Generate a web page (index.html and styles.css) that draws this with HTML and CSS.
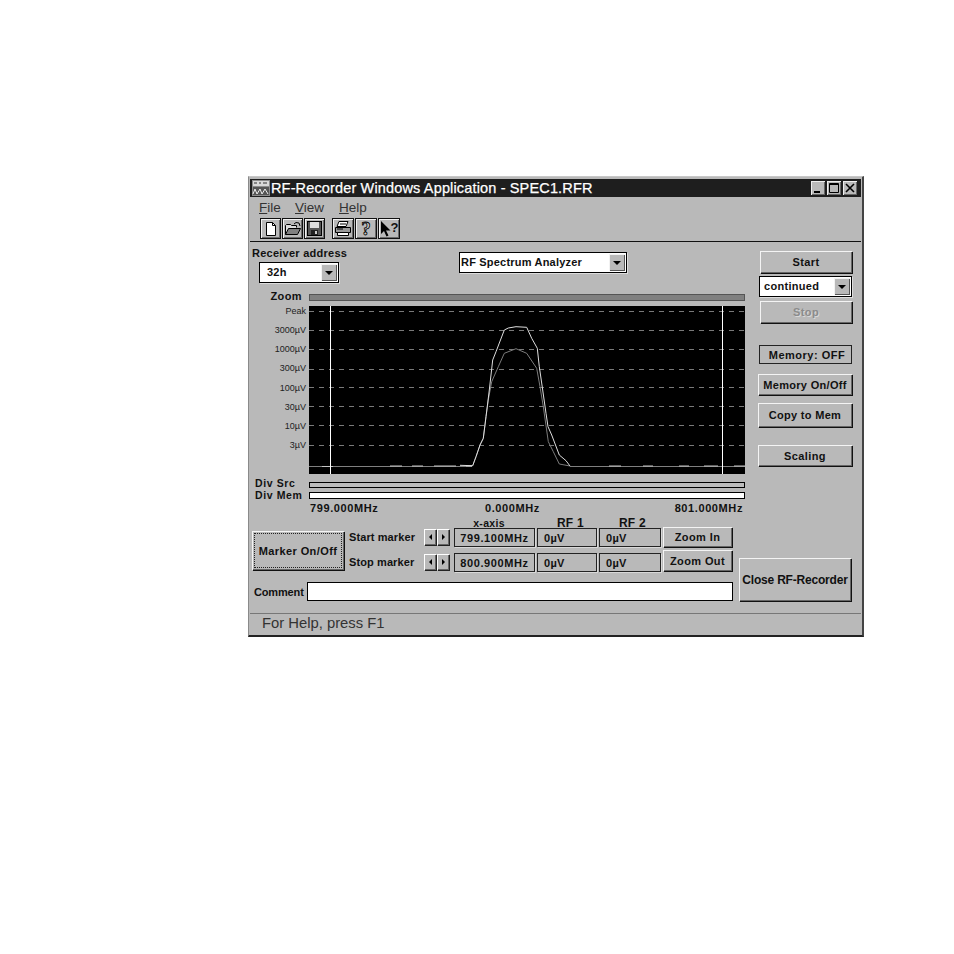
FILE: index.html
```html
<!DOCTYPE html>
<html lang="en">
<head>
<meta charset="utf-8">
<title>RF-Recorder Windows Application</title>
<link rel="stylesheet" href="styles.css">
</head>
<body>
<div class="window">
  <div class="titlebar">
    <svg class="app-icon" width="18" height="16" viewBox="0 0 18 16"><rect width="18" height="16" fill="#8c8c8c"/><rect x="1" y="1" width="16" height="5" fill="#d8d8d8"/><path d="M2 3h3M7 3h2M11 3h4" stroke="#333"/><rect x="1" y="7" width="16" height="8" fill="#555"/><path d="M1 14l2-5 2 5 3-5 2 5 3-5 3 5" fill="none" stroke="#eee"/></svg>
    <span class="title-text">RF-Recorder Windows Application - SPEC1.RFR</span>
    <div class="caption-buttons">
      <span class="caption-btn"><svg width="14" height="14" viewBox="0 0 14 14"><rect x="3" y="10" width="6" height="2" fill="#000"/></svg></span>
      <span class="caption-btn"><svg width="14" height="14" viewBox="0 0 14 14"><path d="M2.500 2.500h9v9h-9zM2.500 3.500h9" fill="none" stroke="#000"/></svg></span>
      <span class="caption-btn"><svg width="14" height="14" viewBox="0 0 14 14"><path d="M3 3l8 8M11 3l-8 8" stroke="#000" stroke-width="1.6"/></svg></span>
    </div>
  </div>
  <div class="menubar"><span class="menu-item"><u>F</u>ile</span><span class="menu-item"><u>V</u>iew</span><span class="menu-item"><u>H</u>elp</span></div>
  <div class="toolbar">
    <div class="tool-group">
      <span class="tool"><svg width="14" height="16" viewBox="0 0 14 16"><path d="M2.500 1.500h6l3 3v10h-9z" fill="#fff" stroke="#000"/><path d="M8.500 1.500v3h3" fill="none" stroke="#000"/></svg></span>
      <span class="tool"><svg width="18" height="14" viewBox="0 0 18 14"><path d="M1.500 12.500v-9l1-1h4l1 1h5v2" fill="#ddd" stroke="#000"/><path d="M1.500 12.500l3-6h12l-3 6z" fill="#808080" stroke="#000"/><path d="M10 2l2-1.500 3 .5 1 3" fill="none" stroke="#000"/></svg></span>
      <span class="tool"><svg width="15" height="15" viewBox="0 0 15 15"><rect x=".5" y=".5" width="14" height="14" fill="#555" stroke="#000"/><rect x="3" y="1" width="9" height="6" fill="#ddd"/><rect x="4" y="9" width="7" height="5" fill="#222"/><rect x="8" y="10" width="2" height="3" fill="#ccc"/></svg></span>
    </div>
    <div class="tool-group tool-group-wide">
      <span class="tool"><svg width="18" height="15" viewBox="0 0 18 15"><path d="M5 .5h9l-2 5H3z" fill="#fff" stroke="#000"/><path d="M1.500 6.500h15v5h-15z" fill="#999" stroke="#000"/><path d="M3.500 11.500h11v3h-11z" fill="#fff" stroke="#000"/><path d="M3 8h6M6 3h6" stroke="#000"/></svg></span>
      <span class="tool"><span class="tool-question">?</span></span>
      <span class="tool"><svg class="tool-cursor" width="11" height="16" viewBox="0 0 11 16"><path d="M1 0v13l3-3 2.500 5.500 2-1L6 9.500h4.500z" fill="#000"/></svg><span class="tool-helpmark">?</span></span>
    </div>
  </div>

  <div class="upper">
    <div class="upper-left">
      <div class="selectors">
        <div class="receiver">
          <div class="field-title">Receiver address</div>
          <div class="combo combo-receiver"><span class="combo-value">32h</span><span class="combo-arrow"><i></i></span></div>
        </div>
        <div class="combo combo-mode"><span class="combo-value">RF Spectrum Analyzer</span><span class="combo-arrow"><i></i></span></div>
      </div>
      <div class="plot-grid">
        <div class="row-label zoom-label">Zoom</div>
        <div class="zoom-bar"></div>
        <div class="axis-labels">
          <span>Peak</span><span>3000µV</span><span>1000µV</span><span>300µV</span><span>100µV</span><span>30µV</span><span>10µV</span><span>3µV</span>
        </div>
        <svg class="chart" width="436" height="168" viewBox="0 0 436 168">
          <rect width="436" height="168" fill="#000"/>
          <g stroke="#7a7a7a" stroke-dasharray="5 5">
            <path d="M0 5.500h436M0 24.500h436M0 43.500h436M0 63.500h436M0 81.500h436M0 100.500h436M0 119.500h436M0 139.500h436"/>
          </g>
          <path d="M0 160.500h163M261 160.500h175" stroke="#7f7f7f"/>
          <path d="M13 160.500h11M81 160h12M103 160h11M125 160h22M157 160h6M300 160h12M334 160h10M370 160h10M395 160h14M425 160h11" stroke="#c4c4c4" stroke-width="1"/>
          <path d="M21.500 0v168M413.500 0v168" stroke="#fff"/>
          <polyline fill="none" stroke="#7c7c7c" points="163.700,159.700 167,150.700 171,139 174.300,132.300 177,110.700 179.300,94 182.700,75.700 189.300,60.700 195.300,47.300 207,42.700 217.700,47.300 227.700,62.300 231,80.700 234.300,100.700 239.300,135.700 244.300,145.700 250.300,158 261,160"/>
          <polyline fill="none" stroke="#dedede" points="151,159.300 163.700,159.700 167,150.700 171,139 174.300,132.300 177,110.700 180.300,84 183.700,54 187,45.700 195.300,24 199.300,22 207,20.700 217.700,21.300 222.700,32.300 228.300,42.300 230.300,60.700 233.700,84 237,107.300 239,120.700 242.700,129 250.300,149 257,154.700 261,160"/>
        </svg>
        <div class="row-label div-src-label">Div Src</div>
        <div class="div-bar div-src"></div>
        <div class="row-label div-mem-label">Div Mem</div>
        <div class="div-bar div-mem"></div>
        <div class="freq-row"><span>799.000MHz</span><span>0.000MHz</span><span>801.000MHz</span></div>
      </div>
    </div>
    <div class="side">
      <button class="btn side-start">Start</button>
      <div class="combo combo-run"><span class="combo-value">continued</span><span class="combo-arrow"><i></i></span></div>
      <button class="btn side-stop">Stop</button>
      <div class="memory-state">Memory: OFF</div>
      <button class="btn side-mem">Memory On/Off</button>
      <button class="btn side-copy">Copy to Mem</button>
      <button class="btn side-scale">Scaling</button>
    </div>
  </div>

  <div class="lower">
    <div class="lower-left">
      <div class="marker-area">
        <button class="btn marker-btn"><span class="focus-box">Marker On/Off</span></button>
        <div class="marker-rows">
          <div class="marker-row marker-head">
            <span class="col-head head-x">x-axis</span><span class="col-head head-rf1">RF 1</span><span class="col-head head-rf2">RF 2</span>
          </div>
          <div class="marker-row marker-row-start">
            <span class="marker-label">Start marker</span>
            <span class="spin"><b class="spin-btn"><i class="tri-left"></i></b><b class="spin-btn"><i class="tri-right"></i></b></span>
            <span class="readout readout-x">799.100MHz</span><span class="readout">0µV</span><span class="readout">0µV</span>
            <button class="btn zoom-btn">Zoom In</button>
          </div>
          <div class="marker-row marker-row-stop">
            <span class="marker-label">Stop marker</span>
            <span class="spin"><b class="spin-btn"><i class="tri-left"></i></b><b class="spin-btn"><i class="tri-right"></i></b></span>
            <span class="readout readout-x">800.900MHz</span><span class="readout">0µV</span><span class="readout">0µV</span>
            <button class="btn zoom-btn zoom-out">Zoom Out</button>
          </div>
        </div>
      </div>
      <div class="comment-row"><span class="comment-label">Comment</span><div class="comment-input"></div></div>
    </div>
    <button class="btn close-btn">Close RF-Recorder</button>
  </div>
  <div class="statusbar">For Help, press F1</div>
</div>
</body>
</html>
```

FILE: styles.css
```css
* { box-sizing: border-box; }
html, body { margin: 0; padding: 0; background: #fff; }
body { width: 954px; height: 954px; padding: 176px 0 0 248px; font-family: "Liberation Sans", Arial, sans-serif; color: #111; }

.window { width: 616px; height: 461px; background: #b9b9b9; padding: 2px 1px 0; border: 1px solid #8a8a8a; border-right: 2px solid #444; border-bottom: 2px solid #222; border-top-color: #c8c8c8; display: flex; flex-direction: column; }

.titlebar { height: 18px; background: #1e1e1e; display: flex; align-items: center; color: #fff; padding-left: 2px; flex: none; }
.app-icon { flex: none; }
.title-text { font-size: 14.5px; margin-left: 1px; letter-spacing: .15px; white-space: nowrap; -webkit-text-stroke: .25px #fff; }
.caption-buttons { margin-left: auto; display: flex; padding-right: 4px; gap: 2px; }
.caption-btn { width: 14px; height: 14px; background: #b9b9b9; display: flex; align-items: center; justify-content: center; box-shadow: inset 1px 1px 0 #eee, inset -1px -1px 0 #666; }

.menubar { height: 18px; display: flex; padding-left: 9px; font-size: 13.5px; color: #333; align-items: center; flex: none; margin-top: 1px; }
.menu-item { width: 44px; }
.menu-item:first-child { width: 36px; }

.toolbar { height: 26px; padding: 2px 0 0 10px; border-bottom: 1px solid #111; flex: none; display: flex; gap: 7px; }
.tool-group { display: flex; gap: 1px; height: 21px; }
.tool { width: 21px; height: 21px; background: #b9b9b9; display: flex; align-items: center; justify-content: center; border: 1px solid #111; box-shadow: inset 1px 1px 0 #f2f2f2, inset -1px -1px 0 #6a6a6a; }
.tool-group-wide .tool { width: 22px; }
.tool-question { font-family: "Liberation Serif", serif; font-weight: bold; font-size: 19px; line-height: 17px; color: #c8c8c8; -webkit-text-stroke: .8px #000; }
.tool-cursor { flex: none; }
.tool-helpmark { font-weight: bold; font-size: 13px; line-height: 13px; margin-top: -3px; }

.upper { display: flex; height: 275px; flex: none; }
.upper-left { width: 495px; display: flex; flex-direction: column; }
.selectors { display: flex; height: 52px; flex: none; }
.receiver { width: 209px; padding-left: 2px; flex: none; }
.field-title { font-size: 11px; font-weight: bold; letter-spacing: .25px; line-height: 13px; margin-top: 5px; }

.combo { display: flex; align-items: stretch; background: #fff; border: 1px solid #000; height: 21px; padding: 1px; box-shadow: 1px 1px 0 #ddd; }
.combo-value { flex: 1; font-size: 11px; font-weight: bold; letter-spacing: .2px; line-height: 17px; white-space: nowrap; }
.combo-arrow { width: 16px; background: #b9b9b9; display: flex; align-items: center; justify-content: center; box-shadow: inset 1px 1px 0 #f2f2f2, inset -1px -1px 0 #555; flex: none; }
.combo-arrow i { width: 0; height: 0; border: 4px solid transparent; border-top: 4px solid #000; border-bottom: 0; }
.combo-receiver { width: 80px; margin: 2px 0 0 7px; }
.combo-receiver .combo-value { padding-left: 6px; }
.combo-mode { width: 168px; margin-top: 10px; }
.combo-run { width: 93px; margin: 3px 0 0 1px; }
.combo-run .combo-value { padding-left: 3px; letter-spacing: .3px; }

.plot-grid { display: grid; grid-template-columns: 59px 436px; grid-template-rows: 12px 168px 8px 10px 25px; }
.row-label { font-size: 10.5px; font-weight: bold; letter-spacing: .6px; line-height: 10px; white-space: nowrap; }
.zoom-label { grid-column: 1; grid-row: 1; height: 7px; text-align: right; padding-right: 7px; font-size: 11px; letter-spacing: .4px; line-height: 7px; margin-top: -1px; }
.zoom-bar { grid-column: 2; grid-row: 1; height: 7px; background: #808080; border: 1px solid #555; }
.axis-labels { grid-column: 1; grid-row: 2; margin-top: -4.5px; display: grid; grid-auto-rows: 19.15px; font-size: 9px; color: #222; text-align: right; padding-right: 3px; align-items: center; height: 160px; }
.chart { grid-column: 2; grid-row: 2; display: block; }

.div-bar { grid-column: 2; border: 1px solid #000; }
.div-src { grid-row: 4; height: 6px; background: #bdbdbd; }
.div-mem { grid-row: 5; height: 7px; background: #fff; }
.div-src-label { grid-column: 1; grid-row: 4; padding-left: 5px; margin-top: -4px; }
.div-mem-label { grid-column: 1; grid-row: 5; padding-left: 5px; margin-top: -2px; }
.freq-row { grid-column: 2; grid-row: 5; display: grid; grid-template-columns: 176px 60px 1fr; font-size: 11px; font-weight: bold; letter-spacing: .6px; padding-top: 10px; align-self: start; height: 25px; line-height: 13px; }
.freq-row span:first-child { padding-left: 1px; }
.freq-row span:nth-child(3) { text-align: right; padding-right: 2px; }

.side { width: 94px; margin-left: 13px; flex: none; display: flex; flex-direction: column; align-items: flex-start; padding-top: 9px; }
.btn { font-family: "Liberation Sans", Arial, sans-serif; font-size: 11px; font-weight: bold; letter-spacing: .4px; color: #111; background: #b9b9b9; border: 0; padding: 0; box-shadow: inset 1px 1px 0 #f4f4f4, inset -1px -1px 0 #666, 1px 1px 0 #111; white-space: nowrap; cursor: default; }
.side-start { width: 92px; height: 22px; margin-left: 2px; }
.side-stop { width: 92px; height: 22px; margin: 4px 0 0 2px; color: #8b8b8b; text-shadow: 1px 1px 0 #d8d8d8; }
.memory-state { width: 93px; height: 19px; margin: 22px 0 0 1px; border: 1px solid #222; font-size: 11px; font-weight: bold; letter-spacing: .5px; text-align: center; line-height: 18px; padding-left: 3px; }
.side-mem { width: 94px; height: 21px; margin-top: 10px; letter-spacing: .3px; }
.side-copy { width: 94px; height: 24px; margin-top: 8px; letter-spacing: .3px; }
.side-scale { width: 94px; height: 21px; margin-top: 18px; }

.lower { display: flex; flex: none; height: 96px; }
.lower-left { width: 483px; flex: none; }
.marker-area { display: flex; height: 65px; }
.marker-btn { width: 92px; height: 39px; margin: 14px 0 0 2px; padding: 2px; flex: none; }
.focus-box { display: flex; align-items: center; justify-content: center; height: 100%; border: 1px dotted #222; }
.marker-rows { margin-left: 5px; display: flex; flex-direction: column; }
.marker-row { display: grid; grid-template-columns: 75px 30px 83px 62px 64px 70px; align-items: start; }
.marker-head { height: 11px; }
.marker-row-start { height: 25px; }
.marker-row-stop { height: 19px; }
.col-head { font-size: 10.5px; font-weight: bold; text-align: center; letter-spacing: .3px; line-height: 12px; }
.head-x { grid-column: 3; padding-right: 13px; }
.head-rf1 { grid-column: 4; font-size: 12px; padding-left: 5px; }
.head-rf2 { grid-column: 5; font-size: 12px; padding-left: 3px; }
.marker-label { font-size: 11px; font-weight: bold; letter-spacing: .1px; line-height: 19px; white-space: nowrap; }
.spin { display: flex; gap: 1px; padding-top: 1px; }
.spin-btn { width: 12px; height: 16px; display: flex; align-items: center; justify-content: center; background: #b9b9b9; box-shadow: inset 1px 1px 0 #fff, inset -1px -1px 0 #666, 1px 1px 0 #222; }
.tri-left { border: 3px solid transparent; border-right: 3px solid #000; border-left: 0; }
.tri-right { border: 3px solid transparent; border-left: 3px solid #000; border-right: 0; }
.readout { display: block; height: 19px; border: 1px solid #222; margin-right: 2px; font-size: 11px; font-weight: bold; letter-spacing: .3px; line-height: 18px; padding-left: 6px; box-shadow: 1px 1px 0 #d8d8d8; }
.readout-x { text-align: center; padding: 0; letter-spacing: .6px; }
.zoom-btn { width: 69px; height: 20px; margin-top: -1px; }
.zoom-out { height: 21px; margin-top: -3px; }

.comment-row { display: flex; align-items: center; padding-left: 4px; }
.comment-label { width: 53px; font-size: 11px; font-weight: bold; letter-spacing: -.15px; }
.comment-input { width: 426px; height: 19px; background: #fff; border: 1px solid #000; }
.close-btn { width: 112px; height: 43px; margin: 41px 0 0 6px; font-size: 12px; letter-spacing: -.2px; flex: none; }

.statusbar { height: 22px; border-top: 1px solid #777; font-size: 14.8px; color: #333; line-height: 19px; padding-left: 12px; flex: none; }
```
